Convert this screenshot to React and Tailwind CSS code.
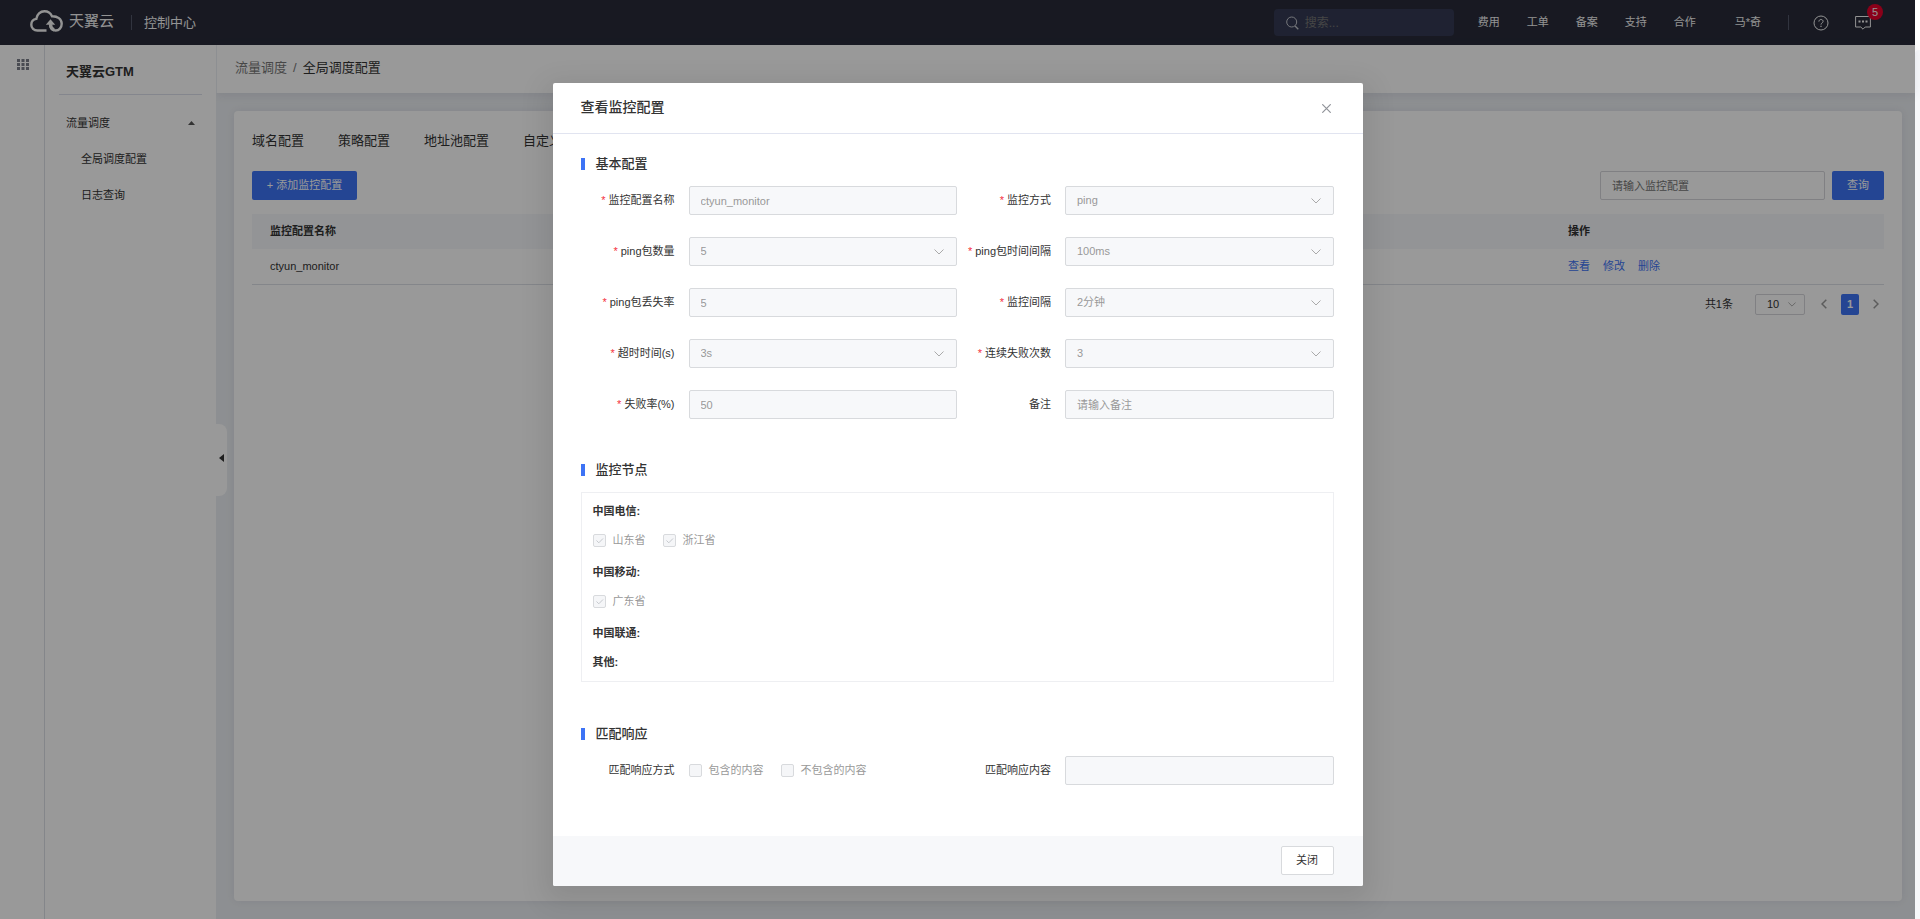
import React, { useId } from "react";
import clsx from "clsx";

const NAV_LINKS = ["费用", "工单", "备案", "支持", "合作"];

const TABS = ["域名配置", "策略配置", "地址池配置", "自定义线路"];

const BASIC_FIELDS = [
  { label: "监控配置名称", value: "ctyun_monitor", required: true },
  { label: "监控方式", value: "ping", required: true, select: true },
  { label: "ping包数量", value: "5", required: true, select: true },
  { label: "ping包时间间隔", value: "100ms", required: true, select: true },
  { label: "ping包丢失率", value: "5", required: true },
  { label: "监控间隔", value: "2分钟", required: true, select: true },
  { label: "超时时间(s)", value: "3s", required: true, select: true },
  { label: "连续失败次数", value: "3", required: true, select: true },
  { label: "失败率(%)", value: "50", required: true },
  { label: "备注", value: "", placeholder: "请输入备注" },
];

const NODE_GROUPS = [
  { name: "中国电信", nodes: ["山东省", "浙江省"] },
  { name: "中国移动", nodes: ["广东省"] },
  { name: "中国联通", nodes: [] },
  { name: "其他", nodes: [] },
];

const Chevron = ({ className }) => (
  <svg viewBox="0 0 10 6" className={className} fill="none" stroke="currentColor" aria-hidden="true">
    <path d="M0.5 0.5 5 5 9.5 0.5" />
  </svg>
);

const CloudLogo = () => (
  <svg viewBox="0 0 33 22" className="h-[22px] w-[33px]" fill="none" stroke="currentColor" strokeWidth="2.4" aria-hidden="true">
    <path d="M16.500 20.500H7.400C3.900 20.500 1.300 18 1.300 14.700c0-2.900 2.100-5.300 5-5.800C6.900 4.500 10.300 1.300 14.500 1.300c3.300 0 6.100 1.900 7.500 4.900 5.400-.2 9.700 2.800 9.700 7.500 0 4-2.700 6.800-6 6.800-3 0-5.200-2.300-5.200-5.300V13" />
    <path d="M20.500 14.500c.1 2.600 1.400 4.600 3.600 5.300" strokeWidth="3.400" />
    <path d="M15.800 14.800 20.500 9.200 25.200 14.800Z" fill="currentColor" stroke="none" />
  </svg>
);

const Header = () => (
  <header className="flex h-[45px] shrink-0 items-center bg-[#282b3a] pr-11 pl-[30px] text-[#f5f5f5]">
    <div className="flex w-[101px] items-center gap-1.5 pb-[3px]">
      <CloudLogo />
      <span className="text-[15px] leading-5">天翼云</span>
    </div>
    <span className="h-[15px] w-px bg-[#53576a]" />
    <a href="#console" className="ml-3 text-[13px]">
      控制中心
    </a>

    <label className="ml-auto flex h-[27px] w-[180px] items-center gap-1.5 rounded-sm bg-[#343a54] px-3">
      <svg viewBox="0 0 13 14" className="h-[14px] w-[13px] shrink-0 text-[#c4c6ce]" fill="none" stroke="currentColor" aria-hidden="true">
        <circle cx="5.700" cy="6" r="5" />
        <path d="M9 10 12.300 13.300" strokeWidth="1.300" />
      </svg>
      <input
        type="text"
        aria-label="搜索"
        placeholder="搜索..."
        className="w-full min-w-0 bg-transparent text-xs outline-none placeholder:text-[#757575]"
      />
    </label>

    <nav className="ml-6 flex gap-[27px] text-[11px]">
      {NAV_LINKS.map((link) => (
        <a key={link} href="#nav">
          {link}
        </a>
      ))}
    </nav>
    <a href="#account" className="ml-[39px] text-[11px]">
      马*奇
    </a>
    <span className="ml-[27px] h-[15px] w-px bg-[#53576a]" />
    <button type="button" aria-label="帮助" className="ml-6">
      <svg viewBox="0 0 16 16" className="h-4 w-4" fill="none" stroke="currentColor" aria-hidden="true">
        <circle cx="8" cy="8" r="7" />
        <path d="M5.900 6.600c0-1.300.9-2.100 2.100-2.100s2.100.8 2.100 1.900c0 1.500-2.100 1.600-2.100 3.200" />
        <path d="M8 10.700v1.200" strokeWidth="1.200" />
      </svg>
    </button>
    <button type="button" aria-label="消息" className="relative ml-[26px]">
      <svg viewBox="0 0 16 15" className="h-[15px] w-4" fill="none" stroke="currentColor" aria-hidden="true">
        <path d="M.600 1.500h14.800v10.500H10.200L8 14.200 5.800 12H.600Z" />
        <path d="M3.500 6.500h2M7 6.500h2M10.500 6.500h2" strokeWidth="1.800" />
      </svg>
      <span className="absolute -top-[11px] left-3 flex h-4 w-4 items-center justify-center rounded-full bg-[#e6002a] text-[11px] leading-none">
        5
      </span>
    </button>
  </header>
);

const Sidebar = () => (
  <aside className="relative w-[171px] shrink-0 bg-white px-3.5 text-[11px] text-[#333]">
    <h1 className="border-b border-[#dcdfec] px-[7px] pt-[17px] pb-3 text-[13px] leading-5 font-bold">天翼云GTM</h1>
    <nav className="pt-[10px]">
      <a href="#dispatch" className="flex h-9 items-center justify-between px-[7px]">
        流量调度
        <svg viewBox="0 0 7 4" className="h-1 w-[7px] text-[#555]" fill="currentColor" aria-hidden="true">
          <path d="M0 4 3.500 0 7 4Z" />
        </svg>
      </a>
      <a href="#global" className="flex h-9 items-center pl-[22px]">
        全局调度配置
      </a>
      <a href="#logs" className="flex h-9 items-center pl-[22px]">
        日志查询
      </a>
    </nav>
    <button
      type="button"
      aria-label="收起菜单"
      className="absolute top-[379px] left-full z-10 flex h-[72px] w-[11px] items-center justify-center rounded-r-lg bg-white pb-1"
    >
      <svg viewBox="0 0 5 8" className="h-2 w-[5px]" fill="currentColor" aria-hidden="true">
        <path d="M5 0 0 4 5 8Z" />
      </svg>
    </button>
  </aside>
);

const MonitorList = () => (
  <section className="flex-1 rounded bg-white px-[18px] pt-5 text-[11px] text-[#333] shadow-[0_0_9px_rgba(80,80,120,0.1)]">
    <div className="flex gap-[34px] text-[13px] leading-5">
      {TABS.map((tab) => (
        <button key={tab} type="button" className="whitespace-nowrap">
          {tab}
        </button>
      ))}
    </div>

    <div className="mt-5 flex gap-[7px]">
      <button type="button" className="mr-auto h-[29px] w-[105px] rounded-xs bg-[#3d73f5] text-white">
        + 添加监控配置
      </button>
      <input
        type="text"
        aria-label="监控配置"
        placeholder="请输入监控配置"
        className="h-[29px] w-[225px] rounded-xs border border-[#d5d6da] px-[11px] placeholder:text-[#757575]"
      />
      <button type="button" className="h-[29px] w-[52px] rounded-xs bg-[#3d73f5] text-white">
        查询
      </button>
    </div>

    <table className="mt-3.5 w-full text-left">
      <thead>
        <tr className="h-[35px] bg-[#f5f7fa]">
          <th className="px-[18px] font-bold">监控配置名称</th>
          <th className="w-[334px] px-[18px] font-bold">操作</th>
        </tr>
      </thead>
      <tbody>
        <tr className="h-[35px] border-b border-[#dcdfe6]">
          <td className="px-[18px]">ctyun_monitor</td>
          <td className="px-[18px]">
            <div className="flex gap-[13px] text-[#3d73f5]">
              <a href="#view">查看</a>
              <a href="#edit">修改</a>
              <a href="#delete">删除</a>
            </div>
          </td>
        </tr>
      </tbody>
    </table>

    <div className="mt-[9px] flex h-[21px] items-center justify-end pr-1.5">
      <span>共1条</span>
      <span className="relative ml-[22px]">
        <select aria-label="每页条数" className="h-[21px] w-[50px] appearance-none rounded-xs border border-[#d5d6da] pl-[11px]">
          <option>10</option>
        </select>
        <Chevron className="pointer-events-none absolute top-2 right-[9px] h-[5px] w-2 text-[#999]" />
      </span>
      <button type="button" aria-label="上一页" className="ml-[15px] flex w-[7px] justify-center text-[#999]">
        <svg viewBox="0 0 6 10" className="h-[10px] w-1.5" fill="none" stroke="currentColor" strokeWidth="1.500" aria-hidden="true">
          <path d="M5.300.700 1 5l4.300 4.300" />
        </svg>
      </button>
      <button type="button" className="mx-[14px] h-[21px] w-[18px] rounded-xs bg-[#3d73f5] font-bold text-white">
        1
      </button>
      <button type="button" aria-label="下一页" className="flex w-[5px] justify-center text-[#999]">
        <svg viewBox="0 0 6 10" className="h-[10px] w-1.5 shrink-0" fill="none" stroke="currentColor" strokeWidth="1.500" aria-hidden="true">
          <path d="M.700.700 5 5 .700 9.300" />
        </svg>
      </button>
    </div>
  </section>
);

const SectionTitle = ({ children, className }) => (
  <h3 className={clsx("flex h-5 items-center gap-[11px] text-[13px] font-medium", className)}>
    <span className="h-3 w-1 bg-[#3d73f5]" />
    {children}
  </h3>
);

const controlStyles =
  "h-[29px] w-full appearance-none rounded-xs border border-[#d8dadd] bg-[#f7f8fa] px-[11px] text-[#999] opacity-100 placeholder:text-[#999]";

const Field = ({ label, value, placeholder, required, select }) => {
  const id = useId();
  return (
    <div className="flex items-center gap-3.5">
      <label htmlFor={id} className="w-[94px] shrink-0 text-right whitespace-nowrap">
        {required && <span className="mr-[3px] text-[#f52f3e]">*</span>}
        {label}
      </label>
      <div className="relative flex-1">
        {select ? (
          <>
            <select id={id} disabled className={controlStyles}>
              <option>{value}</option>
            </select>
            <Chevron className="pointer-events-none absolute top-3 right-[13px] h-1.5 w-[10px] text-[#aaa]" />
          </>
        ) : (
          <input id={id} type="text" disabled defaultValue={value} placeholder={placeholder} className={controlStyles} />
        )}
      </div>
    </div>
  );
};

const Checkbox = ({ label, checked }) => (
  <label className="flex items-center gap-[7px] text-[#999]">
    <span className="relative h-[13px] w-[13px]">
      <input
        type="checkbox"
        disabled
        defaultChecked={checked}
        className="block h-[13px] w-[13px] appearance-none rounded-xs border border-[#d8dadd] bg-[#f5f6f8]"
      />
      {checked && (
        <svg viewBox="0 0 13 13" className="absolute inset-0 h-[13px] w-[13px] text-[#c6c9ce]" fill="none" stroke="currentColor" aria-hidden="true">
          <path d="M3.500 6.500 5.800 8.800 10 4.500" />
        </svg>
      )}
    </span>
    {label}
  </label>
);

const MonitorDialog = () => (
  <div
    role="dialog"
    aria-labelledby="dialog-title"
    className="w-[810px] max-w-full rounded-xs bg-white text-[11px] text-[#333] shadow-[0_8px_28px_8px_rgba(0,0,0,0.09)]"
  >
    <div className="flex h-[51px] items-center justify-between border-b border-[#e1e4f0] px-7">
      <h2 id="dialog-title" className="pb-0.5 text-sm font-medium">
        查看监控配置
      </h2>
      <button type="button" aria-label="关闭对话框" className="px-1 text-[#909399]">
        <svg viewBox="0 0 9 9" className="h-[9px] w-[9px]" fill="none" stroke="currentColor" strokeWidth="1.200" aria-hidden="true">
          <path d="M.300.300 8.700 8.700M8.700.300.300 8.700" />
        </svg>
      </button>
    </div>

    <form className="pt-5 pr-[29px] pb-[51px] pl-7">
      <SectionTitle>基本配置</SectionTitle>
      <div className="mt-3 grid grid-cols-2 gap-y-[22px]">
        {BASIC_FIELDS.map((field) => (
          <Field key={field.label} {...field} />
        ))}
      </div>

      <SectionTitle className="mt-[41px]">监控节点</SectionTitle>
      <div className="mt-3 border border-[#eeeff2] px-[11px] py-1">
        {NODE_GROUPS.map(({ name, nodes }) => (
          <div key={name}>
            <h4 className="leading-[29px] font-bold">{name}:</h4>
            {nodes.length > 0 && (
              <div className="mb-[3px] flex h-[29px] items-center gap-[17px]">
                {nodes.map((node) => (
                  <Checkbox key={node} label={node} checked />
                ))}
              </div>
            )}
          </div>
        ))}
      </div>

      <SectionTitle className="mt-[42px]">匹配响应</SectionTitle>
      <div className="mt-3 grid grid-cols-2">
        <div className="flex items-center gap-3.5">
          <span className="w-[94px] text-right">匹配响应方式</span>
          <div className="flex gap-[17px]">
            <Checkbox label="包含的内容" />
            <Checkbox label="不包含的内容" />
          </div>
        </div>
        <Field label="匹配响应内容" value="" />
      </div>
    </form>

    <div className="flex h-[50px] items-center justify-end rounded-b-xs bg-[#f7f8fa] pr-[29px] pb-0.5">
      <button type="button" className="h-[29px] w-[53px] rounded-xs border border-[#d8dadd] bg-white">
        关闭
      </button>
    </div>
  </div>
);

const App = () => (
  <div className="flex min-h-screen bg-white font-['Liberation_Sans','Noto_Sans_CJK_SC',sans-serif]">
    <div className="relative flex min-w-0 flex-1 flex-col">
      <Header />
      <div className="flex flex-1">
        <div className="w-[45px] shrink-0 border-r border-[#dcdfe6] bg-white pt-[13px] pl-[17px]">
          <button type="button" aria-label="全部产品" className="block text-[#7c7f8a]">
            <svg viewBox="0 0 12 12" className="h-3 w-3" fill="currentColor" aria-hidden="true">
              <path d="M0 1h3v3H0zM4.500 1h3v3h-3zM9 1h3v3H9zM0 5h3v3H0zM4.500 5h3v3h-3zM9 5h3v3H9zM0 9h3v3H0zM4.500 9h3v3h-3zM9 9h3v3H9z" />
            </svg>
          </button>
        </div>
        <Sidebar />
        <main className="flex min-w-0 flex-1 flex-col bg-[#eceff3]">
          <div className="flex h-12 items-center border-l border-[#eceef3] bg-white pb-[3px] pl-[18px] text-[13px] text-[#333] shadow-[0_2px_9px_rgba(80,80,120,0.12)]">
            <a href="#dispatch" className="text-[#777]">
              流量调度
            </a>
            <span className="mx-1.5 text-[#777]">/</span>
            <span>全局调度配置</span>
          </div>
          <div className="flex flex-1 flex-col py-[18px] pr-[13px] pl-[18px]">
            <MonitorList />
          </div>
        </main>
      </div>

      <div className="absolute inset-0 z-20 flex items-start justify-center bg-black/40 pt-[83px]">
        <MonitorDialog />
      </div>
    </div>
    <div className="w-[5px] shrink-0 pt-[50px]">
      <div className="h-full rounded-tl-sm bg-[#f7f8fa]" />
    </div>
  </div>
);

export default App;
